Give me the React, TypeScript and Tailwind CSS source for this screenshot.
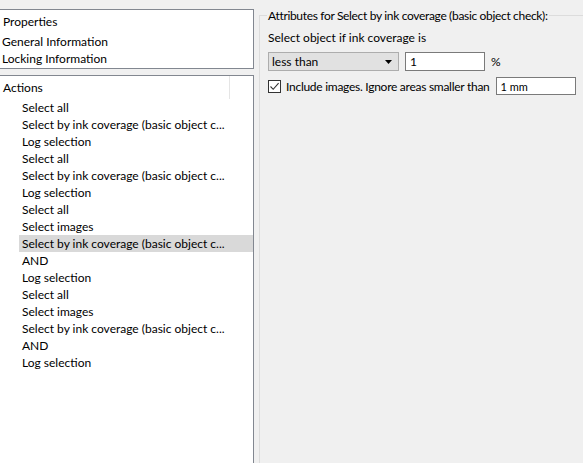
const font = { fontFamily: 'Lato, "Liberation Sans", Arial, sans-serif' };

const actions = [
  "Select all",
  "Select by ink coverage (basic object c...",
  "Log selection",
  "Select all",
  "Select by ink coverage (basic object c...",
  "Log selection",
  "Select all",
  "Select images",
  "Select by ink coverage (basic object c...",
  "AND",
  "Log selection",
  "Select all",
  "Select images",
  "Select by ink coverage (basic object c...",
  "AND",
  "Log selection",
];

const SELECTED = 8;

function Arrow() {
  return (
    <svg width="8" height="4" viewBox="0 0 8 4" className="block">
      <path d="M0 0H7L3.5 4Z" fill="#000" />
    </svg>
  );
}

function Check() {
  return (
    <svg width="11" height="11" viewBox="0 0 11 11" className="block">
      <path d="M1.5 5.5L4.2 8.3L9.6 2.2" fill="none" stroke="#333" strokeWidth="1.1" />
    </svg>
  );
}

export default function App() {
  return (
    <div
      className="flex h-[463px] w-[583px] overflow-hidden whitespace-nowrap bg-[#f0f0f0] text-[12px] leading-[17px] text-black"
      style={font}
    >
      {/* left column: properties + actions lists */}
      <div className="flex w-[254px] shrink-0 flex-col pt-[9px]">
        <div className="h-[60px] border border-l-0 border-[#828790] bg-white">
          <div className="flex h-[23px] items-center pl-[3px]">Properties</div>
          <div className="flex h-[17px] items-center pl-[2px]">General Information</div>
          <div className="flex h-[17px] items-center pl-[2px]">Locking Information</div>
        </div>
        <div className="mt-[6px] flex-1 border border-b-0 border-l-0 border-[#828790] bg-white">
          <div className="flex h-[23px]">
            <div className="flex w-[230px] items-center border-r border-[#e5e5e5] pl-[3px]">
              Actions
            </div>
          </div>
          {actions.map((a, i) => (
            <div
              key={i}
              className={`ml-[19px] flex h-[17px] items-center pl-[3px] ${
                i === SELECTED ? "bg-[#d9d9d9]" : ""
              }`}
            >
              {a}
            </div>
          ))}
        </div>
      </div>

      {/* right column: attributes group */}
      <div className="flex-1 pl-[5px] pt-[15px]">
        <div className="relative h-full border-l border-t border-[#dcdcdc]">
          <div className="absolute -top-[9px] left-[7px] bg-[#f0f0f0] px-[1px] tracking-[-0.33px]">
            Attributes for Select by ink coverage (basic object check):
          </div>
          <div className="pl-[8px] pt-[13px]">
            <div>Select object if ink coverage is</div>
            <div className="mt-[6px] flex items-center">
              <div className="flex h-[19px] w-[131px] items-center justify-between border border-[#adadad] bg-[#e1e1e1] pl-[3px] pr-[5px]">
                <span>less than</span>
                <Arrow />
              </div>
              <div className="ml-[6px] flex h-[19px] w-[80px] items-center border border-[#7a7a7a] bg-white pl-[4px]">
                1
              </div>
              <span className="ml-[6px]">%</span>
            </div>
            <div className="mt-[6px] flex items-center">
              <div className="flex h-[13px] w-[13px] items-center justify-center border border-[#333] bg-white">
                <Check />
              </div>
              <span className="ml-[5px] tracking-[-0.27px]">
                Include images. Ignore areas smaller than
              </span>
              <div className="ml-[6px] flex h-[18px] w-[80px] items-center border border-[#7a7a7a] bg-white pl-[4px] text-[11px]">
                1 mm
              </div>
            </div>
          </div>
        </div>
      </div>
    </div>
  );
}
